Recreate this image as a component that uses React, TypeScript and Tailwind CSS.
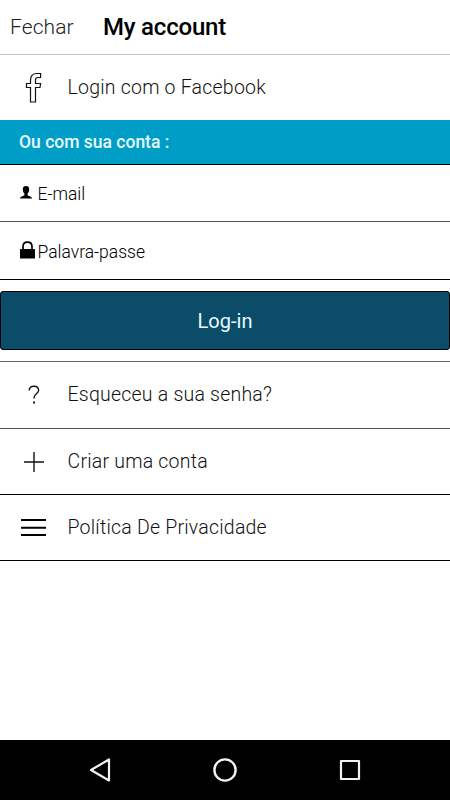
import type { ReactNode } from "react";

function MenuRow({ icon, label, className }: { icon: ReactNode; label: string; className: string }) {
  return (
    <button className={`flex w-full items-center text-left ${className}`}>
      <span className="flex w-[67.5px] shrink-0 justify-center">{icon}</span>
      <span className="text-[19.5px] font-light tracking-[0.22px] whitespace-nowrap text-[#111]">{label}</span>
    </button>
  );
}

function FacebookIcon() {
  return (
    <svg width="18" height="32" viewBox="0 0 18 32" fill="none" stroke="#111" strokeWidth="1.2">
      <path d="M5.5 30V15.5H1.5V11.5H5.5V8C5.5 3.5 8 1.5 11.5 1.5H15.6V5.5H12.8C11 5.5 10.5 6.4 10.5 8V11.5H15.6L15 15.5H10.5V30Z" />
    </svg>
  );
}

function QuestionIcon() {
  return (
    <svg width="12" height="20" viewBox="0 0 12 20" fill="none">
      <path d="M1.2 5.5C1.2 2.7 3.2 1.2 5.8 1.2C8.6 1.2 10.6 2.7 10.6 5.3C10.6 8.7 6 8.8 6 12.6V13.5" stroke="#111" strokeWidth="1.4" />
      <rect x="5.1" y="16.5" width="1.9" height="2" fill="#111" />
    </svg>
  );
}

function PlusIcon() {
  return (
    <svg width="20" height="20" viewBox="0 0 20 20" stroke="#111" strokeWidth="1.4">
      <path d="M10 0V20M0 10H20" />
    </svg>
  );
}

function MenuIcon() {
  return (
    <svg width="25" height="18" viewBox="0 0 25 18" stroke="#000" strokeWidth="2">
      <path d="M0 1H25M0 8.7H25M0 16H25" />
    </svg>
  );
}

function PersonIcon() {
  return (
    <svg width="12" height="13" viewBox="0 0 12 13" fill="#000">
      <path d="M6 0C8.2 0 9.2 1.2 9.2 3.2C9.2 5 8.6 6.5 7.6 7.5V9.2C8.4 10 12 10.3 12 12.6H0C0 10.3 3.6 10 4.4 9.2V7.5C3.4 6.5 2.8 5 2.8 3.2C2.8 1.2 3.8 0 6 0Z" />
    </svg>
  );
}

function LockIcon() {
  return (
    <svg width="15" height="18" viewBox="0 0 15 18">
      <path d="M3 9V5.5C3 2.7 5 1.1 7.5 1.1S12 2.7 12 5.5V9" fill="none" stroke="#000" strokeWidth="1.7" />
      <rect y="8" width="15" height="9.5" rx="0.6" fill="#000" />
    </svg>
  );
}

export default function App() {
  return (
    <div className="flex h-[800px] w-[450px] flex-col overflow-hidden bg-white font-['Roboto',sans-serif] text-black">
      <header className="flex h-[55px] items-center border-b border-[#c4c4c4] pl-[10px]">
        <button className="w-[93px] pt-px text-left text-[21px] font-light tracking-[0.1px] text-[#222]">Fechar</button>
        <h1 className="text-[24px] font-medium tracking-[-0.2px] whitespace-nowrap">My account</h1>
      </header>
      <MenuRow className="h-[65px]" icon={<FacebookIcon />} label="Login com o Facebook" />
      <div className="flex h-[45px] items-center border-b border-black bg-[#009dc7] pl-[19px] text-[17.5px] font-medium text-[#e6faff]">
        Ou com sua conta :
      </div>
      <div className="flex h-[57px] items-center border-b border-[#555] pl-5">
        <span className="w-[17.5px] pb-[1px]"><PersonIcon /></span>
        <span className="pt-[3px] text-[17.5px] font-[350]">E-mail</span>
      </div>
      <div className="flex h-[58px] items-center border-b border-black pl-5">
        <span className="w-[17.5px] pb-[1px]"><LockIcon /></span>
        <span className="pt-[3px] text-[17.5px] font-[350]">Palavra-passe</span>
      </div>
      <div className="border-b border-[#666] pt-[11px] pb-[11px]">
        <button className="flex h-[59px] w-full items-center justify-center rounded-[3px] border border-black bg-[#0b4c69] text-[20px] text-[#e8fbff]">
          Log-in
        </button>
      </div>
      <MenuRow className="h-[67px] border-b border-[#555]" icon={<QuestionIcon />} label="Esqueceu a sua senha?" />
      <MenuRow className="h-[66px] border-b border-black" icon={<PlusIcon />} label="Criar uma conta" />
      <MenuRow className="h-[66px] border-b border-black" icon={<MenuIcon />} label="Política De Privacidade" />
      <nav className="mt-auto flex h-[60px] items-center justify-between bg-black px-[88px]">
        <svg width="24" height="26" viewBox="0 0 24 26" fill="none" stroke="#f2f2f2" strokeWidth="2.2" strokeLinejoin="round">
          <path d="M21 2.5V23.5L3 13Z" />
        </svg>
        <svg width="26" height="26" viewBox="0 0 26 26" fill="none" stroke="#f2f2f2" strokeWidth="2.4">
          <circle cx="13" cy="13" r="10.6" />
        </svg>
        <svg width="24" height="24" viewBox="0 0 24 24" fill="none" stroke="#f2f2f2" strokeWidth="2.2" strokeLinejoin="round">
          <rect x="3" y="3" width="18" height="18" />
        </svg>
      </nav>
    </div>
  );
}
